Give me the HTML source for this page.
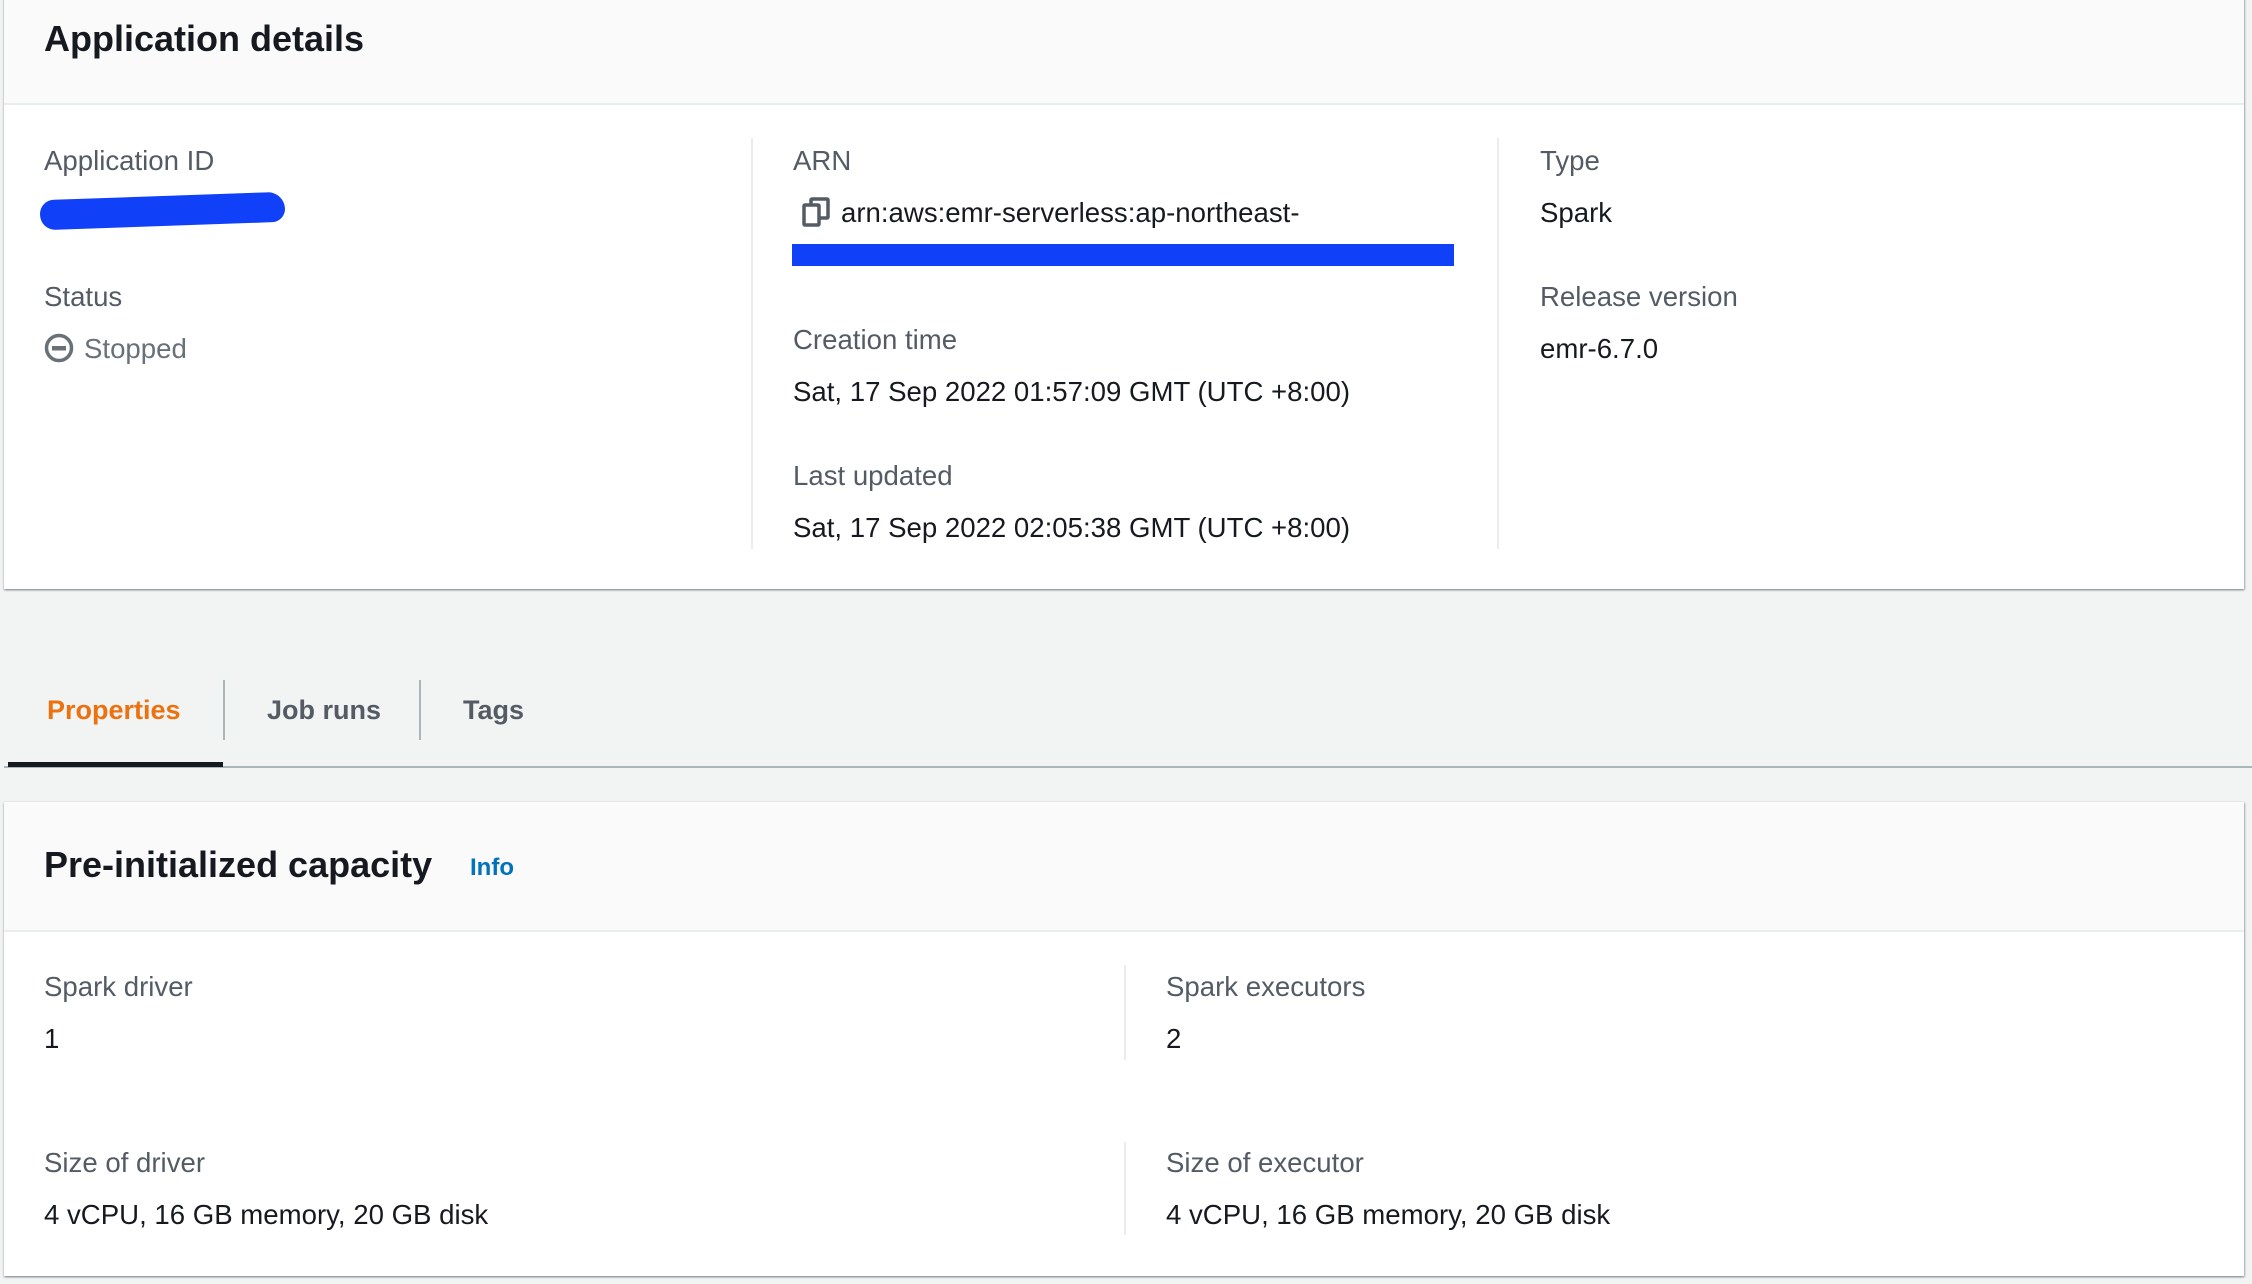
<!DOCTYPE html>
<html><head><meta charset="utf-8"><style>
*{margin:0;padding:0;box-sizing:border-box}
body{width:2252px;height:1284px;background:#f2f3f3;font-family:"Liberation Sans",Arial,sans-serif;position:relative;overflow:hidden;color:#16191f}
.card{position:absolute;left:4px;width:2240px;background:#fff;box-shadow:0 1px 2px rgba(0,28,36,.4),1px 1px 2px rgba(0,28,36,.2)}
.hdr{position:absolute;left:0;top:0;width:100%;background:#fafafa;border-bottom:2px solid #eaeded}
.a{position:absolute;white-space:nowrap}
.lbl{font-size:27.6px;color:#545b64}
.val{font-size:27.6px;color:#16191f}
.h{font-size:36px;font-weight:bold;color:#16191f}
.vd{position:absolute;width:2px;background:#eaeded}
.tab{position:absolute;top:695px;font-size:27px;font-weight:bold;color:#545b64;white-space:nowrap}
</style></head><body>
<div class="card" style="top:-4px;height:593px">
  <div class="hdr" style="height:109px"></div>
</div>
<div class="a h" style="left:44px;top:18px">Application details</div>
<div class="vd" style="left:751px;top:138px;height:411px"></div>
<div class="vd" style="left:1497px;top:138px;height:411px"></div>

<div class="a lbl" style="left:44px;top:145px">Application ID</div>
<div class="a val" style="left:44px;top:197px">00f17</div>
<div class="a" style="left:40px;top:196px;width:245px;height:30px;background:#1040f8;border-radius:15px 18px 14px 16px;transform:rotate(-2deg)"></div>
<div class="a lbl" style="left:44px;top:281px">Status</div>
<svg class="a" style="left:44px;top:333px" width="30" height="30" viewBox="0 0 30 30"><circle cx="15" cy="15" r="12.5" fill="none" stroke="#687078" stroke-width="3.5"/><rect x="8" y="13" width="14" height="4.5" fill="#687078"/></svg>
<div class="a lbl" style="left:84px;top:333px;color:#687078">Stopped</div>

<div class="a lbl" style="left:793px;top:145px">ARN</div>
<svg class="a" style="left:801px;top:197px" width="30" height="30" viewBox="0 0 30 30"><rect x="10" y="2" width="17" height="19" rx="1" fill="none" stroke="#545b64" stroke-width="3.5"/><rect x="3" y="8" width="15" height="20" rx="1" fill="#fff" stroke="#545b64" stroke-width="3.5"/></svg>
<div class="a val" style="left:841px;top:197px">arn:aws:emr-serverless:ap-northeast-</div>
<div class="a" style="left:792px;top:244px;width:662px;height:22px;background:#1040f8"></div>
<div class="a lbl" style="left:793px;top:324px">Creation time</div>
<div class="a val" style="left:793px;top:376px">Sat, 17 Sep 2022 01:57:09 GMT (UTC +8:00)</div>
<div class="a lbl" style="left:793px;top:460px">Last updated</div>
<div class="a val" style="left:793px;top:512px">Sat, 17 Sep 2022 02:05:38 GMT (UTC +8:00)</div>

<div class="a lbl" style="left:1540px;top:145px">Type</div>
<div class="a val" style="left:1540px;top:197px">Spark</div>
<div class="a lbl" style="left:1540px;top:281px">Release version</div>
<div class="a val" style="left:1540px;top:333px">emr-6.7.0</div>

<div class="tab" style="left:47px;color:#ec7211">Properties</div>
<div class="a" style="left:223px;top:680px;width:2px;height:60px;background:#aab7b8"></div>
<div class="tab" style="left:267px">Job runs</div>
<div class="a" style="left:419px;top:680px;width:2px;height:60px;background:#aab7b8"></div>
<div class="tab" style="left:463px">Tags</div>
<div class="a" style="left:4px;top:766px;width:2248px;height:2px;background:#aab7b8"></div>
<div class="a" style="left:8px;top:762px;width:215px;height:5px;background:#16191f"></div>

<div class="card" style="top:802px;height:474px">
  <div class="hdr" style="height:130px"></div>
</div>
<div class="a h" style="left:44px;top:844px">Pre-initialized capacity</div>
<div class="a" style="left:470px;top:854px;font-size:24px;font-weight:bold;color:#0073bb">Info</div>
<div class="vd" style="left:1124px;top:965px;height:95px"></div>
<div class="vd" style="left:1124px;top:1142px;height:93px"></div>
<div class="a lbl" style="left:44px;top:971px">Spark driver</div>
<div class="a val" style="left:44px;top:1023px">1</div>
<div class="a lbl" style="left:44px;top:1147px">Size of driver</div>
<div class="a val" style="left:44px;top:1199px">4 vCPU, 16 GB memory, 20 GB disk</div>
<div class="a lbl" style="left:1166px;top:971px">Spark executors</div>
<div class="a val" style="left:1166px;top:1023px">2</div>
<div class="a lbl" style="left:1166px;top:1147px">Size of executor</div>
<div class="a val" style="left:1166px;top:1199px">4 vCPU, 16 GB memory, 20 GB disk</div>
</body></html>
